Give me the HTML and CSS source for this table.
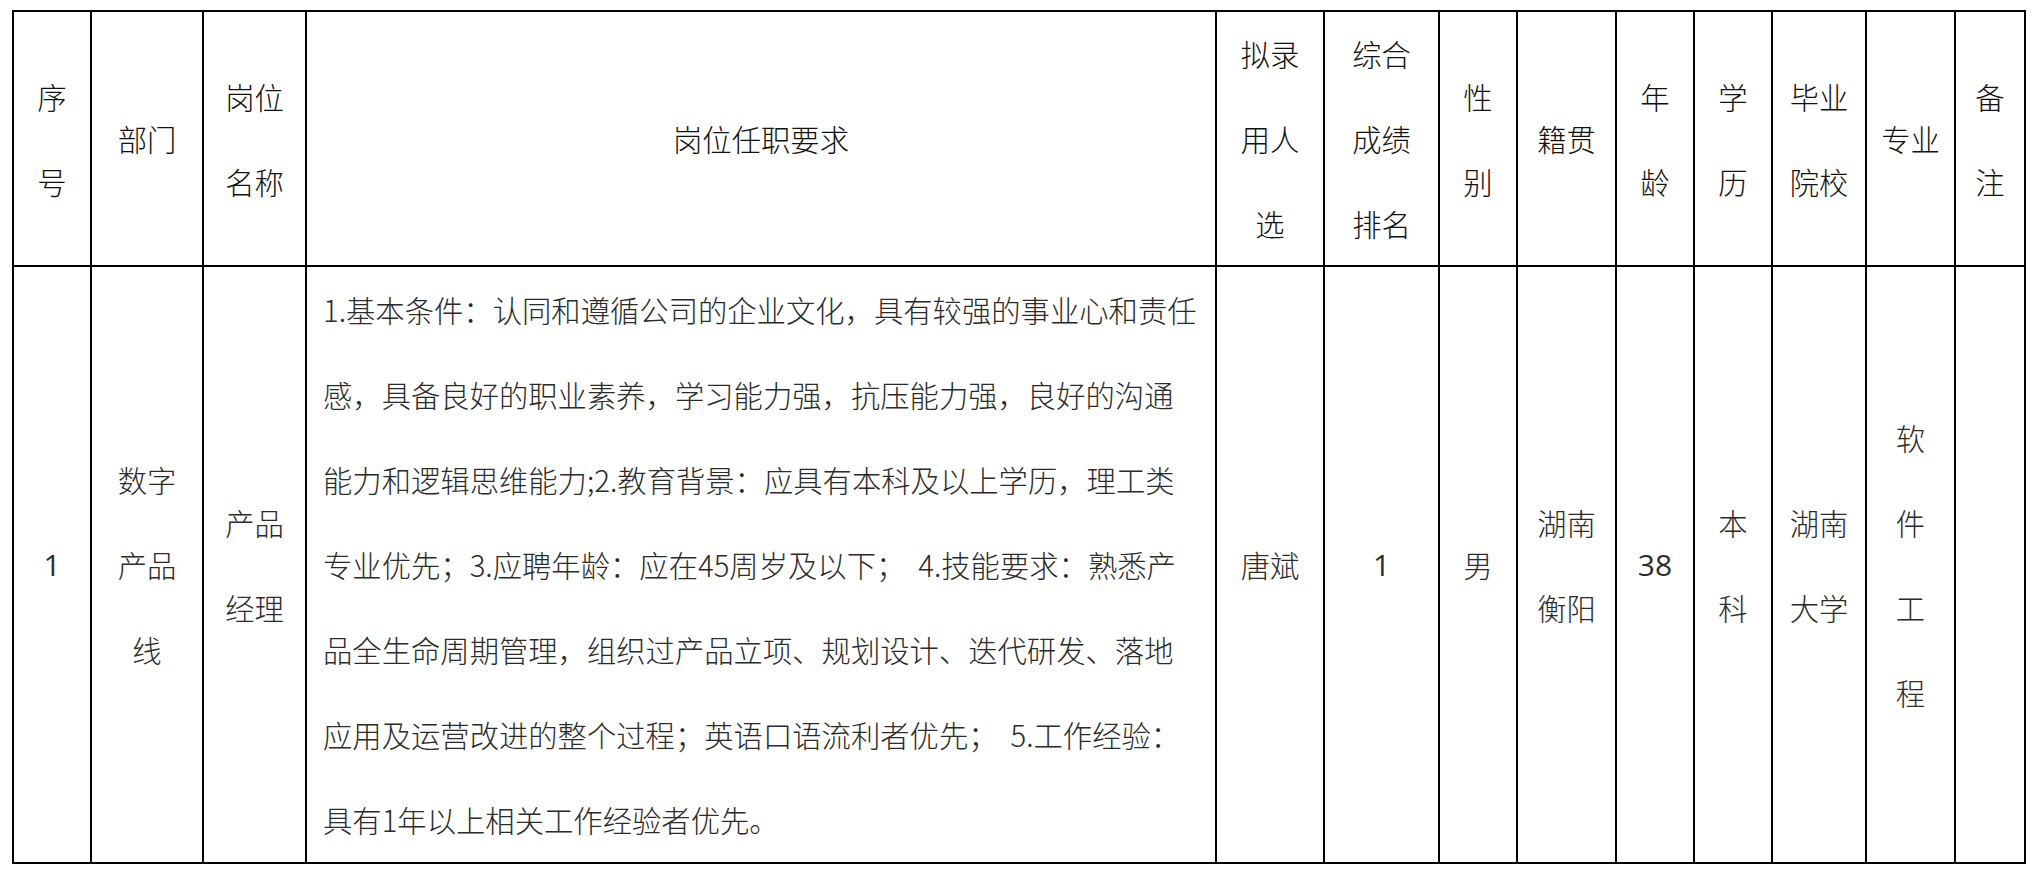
FILE: index.html
```html
<!DOCTYPE html>
<html lang="zh-CN">
<head>
<meta charset="utf-8">
<title>拟录用人选</title>
<link rel="stylesheet" href="styles.css">
</head>
<body>
<div class="sheet">
  <div class="cell head">序<br>号</div>
  <div class="cell head">部门</div>
  <div class="cell head">岗位<br>名称</div>
  <div class="cell head">岗位任职要求</div>
  <div class="cell head">拟录<br>用人<br>选</div>
  <div class="cell head">综合<br>成绩<br>排名</div>
  <div class="cell head">性<br>别</div>
  <div class="cell head">籍贯</div>
  <div class="cell head">年<br>龄</div>
  <div class="cell head">学<br>历</div>
  <div class="cell head">毕业<br>院校</div>
  <div class="cell head">专业</div>
  <div class="cell head">备<br>注</div>

  <div class="cell body num">1</div>
  <div class="cell body">数字<br>产品<br>线</div>
  <div class="cell body">产品<br>经理</div>
  <div class="cell body req">1.基本条件：认同和遵循公司的企业文化，具有较强的事业心和责任<br>感，具备良好的职业素养，学习能力强，抗压能力强，良好的沟通<br>能力和逻辑思维能力;2.教育背景：应具有本科及以上学历，理工类<br>专业优先；3.应聘年龄：应在45周岁及以下；&nbsp;&nbsp;4.技能要求：熟悉产<br>品全生命周期管理，组织过产品立项、规划设计、迭代研发、落地<br>应用及运营改进的整个过程；英语口语流利者优先；&nbsp;&nbsp;5.工作经验：<br>具有1年以上相关工作经验者优先。</div>
  <div class="cell body">唐斌</div>
  <div class="cell body num">1</div>
  <div class="cell body">男</div>
  <div class="cell body">湖南<br>衡阳</div>
  <div class="cell body num">38</div>
  <div class="cell body">本<br>科</div>
  <div class="cell body">湖南<br>大学</div>
  <div class="cell body">软<br>件<br>工<br>程</div>
  <div class="cell body"></div>
</div>
</body>
</html>
```

FILE: styles.css
```css
html, body {
  margin: 0;
  padding: 0;
  background: #ffffff;
}

body {
  font-family: "Noto Sans CJK SC", "Noto Sans", sans-serif;
}

.sheet {
  display: grid;
  grid-template-columns: 78px 112px 103px 910px 108px 115px 78px 99px 78px 78px 94px 89px 70px;
  grid-template-rows: 255px 597px;
  width: max-content;
  margin: 10px 0 0 12px;
  border-left: 2px solid #000;
  border-top: 2px solid #000;
}

.cell {
  box-sizing: border-box;
  border-right: 2px solid #000;
  border-bottom: 2px solid #000;
  display: flex;
  align-items: center;
  justify-content: center;
  text-align: center;
  font-size: 29.33px;
  line-height: 85px;
  white-space: nowrap;
  font-weight: 300;
}

.head {
  color: #111;
}

.body {
  color: #2b2b2b;
}

.num {
  font-family: "Open Sans", "Noto Sans", sans-serif;
  font-weight: 400;
  font-size: 30px;
}

.req {
  justify-content: flex-start;
  text-align: left;
  padding-left: 16px;
}
```
